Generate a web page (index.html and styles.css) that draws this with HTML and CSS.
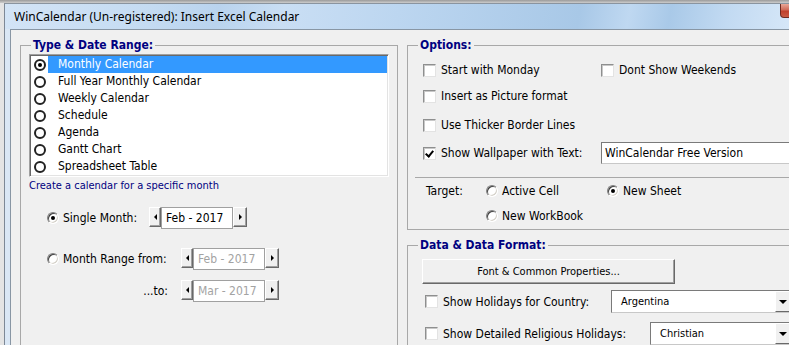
FILE: index.html
```html
<!DOCTYPE html>
<html lang="en">
<head>
    <meta charset="UTF-8">
    <title>WinCalendar - Insert Excel Calendar</title>
    <link rel="stylesheet" href="styles.css">
</head>
<body>
    <div class="window">
        <div class="titlebar">
            <span class="title">WinCalendar (Un-registered): Insert Excel Calendar</span>
            <span class="close"></span>
        </div>
        <div class="client">
            <fieldset class="group group-type">
                <legend>Type &amp; Date Range:</legend>
                <ul class="listbox">
                    <li class="item selected"><span class="lradio on"></span><span class="item-text">Monthly Calendar</span></li>
                    <li class="item"><span class="lradio"></span><span class="item-text">Full Year Monthly Calendar</span></li>
                    <li class="item"><span class="lradio"></span><span class="item-text">Weekly Calendar</span></li>
                    <li class="item"><span class="lradio"></span><span class="item-text">Schedule</span></li>
                    <li class="item"><span class="lradio"></span><span class="item-text">Agenda</span></li>
                    <li class="item"><span class="lradio"></span><span class="item-text">Gantt Chart</span></li>
                    <li class="item"><span class="lradio"></span><span class="item-text">Spreadsheet Table</span></li>
                </ul>
                <p class="hint">Create a calendar for a specific month</p>
                <div class="single-row">
                    <label class="opt single-label"><span class="radio on"></span>Single Month:</label>
                    <div class="spin">
                        <span class="spin-btn prev"></span>
                        <span class="spin-val">Feb - 2017</span>
                        <span class="spin-btn next"></span>
                    </div>
                </div>
                <div class="range">
                    <label class="opt"><span class="radio"></span>Month Range from:</label>
                    <div class="spin disabled">
                        <span class="spin-btn prev"></span>
                        <span class="spin-val">Feb - 2017</span>
                        <span class="spin-btn next"></span>
                    </div>
                    <span class="to">...to:</span>
                    <div class="spin disabled">
                        <span class="spin-btn prev"></span>
                        <span class="spin-val">Mar - 2017</span>
                        <span class="spin-btn next"></span>
                    </div>
                </div>
            </fieldset>

            <div class="right">
                <fieldset class="group group-options">
                    <legend>Options:</legend>
                    <div class="opts">
                        <div class="row">
                            <label class="opt cell1"><span class="check"></span>Start with Monday</label>
                            <label class="opt"><span class="check"></span>Dont Show Weekends</label>
                        </div>
                        <div class="row row2">
                            <label class="opt cell1"><span class="check"></span>Insert as Picture format</label>
                        </div>
                        <div class="row row3">
                            <label class="opt cell1"><span class="check"></span>Use Thicker Border Lines</label>
                        </div>
                        <div class="row row4">
                            <label class="opt cell1"><span class="check on"></span>Show Wallpaper with Text:</label>
                            <span class="textbox">WinCalendar Free Version</span>
                        </div>
                    </div>
                    <div class="sep"></div>
                    <div class="target">
                        <span>Target:</span>
                        <label class="opt"><span class="radio"></span>Active Cell</label>
                        <label class="opt"><span class="radio on"></span>New Sheet</label>
                        <span></span>
                        <label class="opt"><span class="radio"></span>New WorkBook</label>
                    </div>
                </fieldset>

                <fieldset class="group group-data">
                    <legend>Data &amp; Data Format:</legend>
                    <div class="font-btn">Font &amp; Common Properties...</div>
                    <div class="hol-row">
                        <label class="opt country-label"><span class="check"></span>Show Holidays for Country:</label>
                        <div class="combo country">
                            <span class="combo-text">Argentina</span>
                            <span class="combo-btn"></span>
                        </div>
                    </div>
                    <div class="hol-row second">
                        <label class="opt relig-label"><span class="check"></span>Show Detailed Religious Holidays:</label>
                        <div class="combo relig">
                            <span class="combo-text">Christian</span>
                            <span class="combo-btn"></span>
                        </div>
                    </div>
                </fieldset>
            </div>
        </div>
    </div>
</body>
</html>
```

FILE: styles.css
```css
body {
    margin: 0;
    width: 789px;
    height: 345px;
    overflow: hidden;
    background: linear-gradient(#9a9a9a, #cdcdcd 3px, #e4e4e4 3px);
    font-family: "DejaVu Sans Condensed", "DejaVu Sans", sans-serif;
    font-stretch: condensed;
    font-size: 12px;
    color: #000;
}

.window {
    margin: 3px 0 0 4px;
    width: 819px;
    height: 342px;
    border-left: 1px solid #7d8896;
    border-top: 1px solid #8a949f;
    background: #dae7f5;
}

.titlebar {
    height: 25px;
    display: flex;
    align-items: flex-start;
    justify-content: space-between;
    background: linear-gradient(100deg, #d3e4f6 0%, #c4dbf2 18%, #b9d3ee 26%, #c9def4 34%, #bcd6f0 48%, #a8c8e7 70%, #bfd8f1 76%, #a9c9e8 81%, #c2daf2 88%, #d6e7f8 96%);
}

.title {
    padding-left: 9px;
    line-height: 25px;
    font-family: "Noto Sans", sans-serif;
    font-stretch: normal;
    font-size: 12px;
    color: #000;
}

.close {
    width: 44px;
    height: 14px;
    box-sizing: border-box;
    border: 1px solid #6d2a20;
    border-top: none;
    border-radius: 0 0 4px 4px;
    background: linear-gradient(#e9a898, #d06a58 45%, #c0402c 55%, #c85a44);
}

.client {
    margin-left: 5px;
    height: 315px;
    overflow: hidden;
    border-left: 1px solid #8896a4;
    border-top: 1px solid #8896a4;
    background: #f0f0f0;
    display: flex;
    align-items: flex-start;
    gap: 9px;
    padding-left: 9px;
}

.group {
    margin: 0;
    padding: 0;
    border: 1px solid #a8a8a8;
    min-width: 0;
    box-sizing: border-box;
}

.group legend {
    margin-left: 10px;
    padding: 0 2px;
    font-weight: bold;
    color: #000080;
    line-height: 14px;
}

/* left: type & range */
.group-type {
    width: 378px;
    height: 330px;
    margin-top: 8px;
}

.listbox {
    list-style: none;
    margin: 2px 0 0 8px;
    padding: 1px;
    width: 360px;
    height: 123px;
    box-sizing: border-box;
    background: #fff;
    border: 1px solid;
    border-color: #a0a0a0 #fff #fff #a0a0a0;
    box-shadow: inset 1px 1px #696969, inset -1px -1px #e3e3e3;
}

.item {
    display: flex;
    align-items: center;
    height: 17px;
}

.lradio {
    position: relative;
    flex: none;
    width: 12px;
    height: 12px;
    margin-left: 3px;
    box-sizing: border-box;
    border: 2px solid #222;
    border-radius: 50%;
}

.lradio.on::after {
    content: "";
    position: absolute;
    left: 2px;
    top: 2px;
    width: 4px;
    height: 4px;
    border-radius: 50%;
    background: #000;
}

.item-text {
    flex: 1;
    margin-left: 2px;
    padding-left: 10px;
    line-height: 17px;
}

.selected .item-text {
    background: #3399ff;
    color: #fff;
}

.hint {
    margin: 2px 0 0 8px;
    font-size: 11px;
    line-height: 14px;
    color: #000080;
}

.opt {
    display: flex;
    align-items: center;
    gap: 4px;
    white-space: nowrap;
}

.radio {
    position: relative;
    flex: none;
    width: 12px;
    height: 12px;
    box-sizing: border-box;
    border: 1px solid;
    border-color: #808080 #fff #fff #808080;
    border-radius: 50%;
    background: #fff;
    box-shadow: inset 1px 1px #404040, inset -1px -1px #d4d0c8;
}

.radio.on::after {
    content: "";
    position: absolute;
    left: 3px;
    top: 3px;
    width: 4px;
    height: 4px;
    border-radius: 50%;
    background: #000;
}

.single-row {
    display: flex;
    align-items: center;
    height: 22px;
    margin-top: 14px;
    padding-left: 26px;
}

.single-label {
    width: 102px;
}

.range {
    display: grid;
    grid-template-columns: 121px auto;
    justify-content: start;
    align-items: center;
    column-gap: 13px;
    row-gap: 10px;
    margin-top: 19px;
    padding-left: 26px;
}

.to {
    justify-self: end;
}

.spin {
    display: flex;
    align-items: flex-start;
    height: 22px;
}

.spin-btn {
    display: flex;
    align-items: center;
    justify-content: center;
    width: 12px;
    height: 20px;
    box-sizing: border-box;
    background: #f0f0f0;
    border: 1px solid;
    border-color: #fff #696969 #696969 #fff;
    box-shadow: inset -1px -1px #a0a0a0;
}

.spin-btn.next {
    width: 14px;
}

.spin-btn::before {
    content: "";
    border-style: solid;
    border-color: transparent #000;
}

.spin-btn.prev::before {
    border-width: 3px 3px 3px 0;
}

.spin-btn.next::before {
    border-width: 3px 0 3px 3px;
}

.spin-val {
    width: 72px;
    height: 22px;
    box-sizing: border-box;
    border: 1px solid #a0a0a0;
    background: #fff;
    padding-left: 4px;
    line-height: 20px;
}

.disabled .spin-val {
    color: #a3a3a3;
}

/* right: options */
.right {
    display: flex;
    flex-direction: column;
    width: 400px;
}

.group-options {
    margin-top: 8px;
}

.opts {
    margin: 9px 0 0 15px;
}

.row {
    display: flex;
    align-items: center;
    height: 18px;
}

.row2 {
    margin-top: 8px;
}

.row3 {
    margin-top: 11px;
}

.row4 {
    height: 22px;
    margin-top: 8px;
}

.cell1 {
    width: 178px;
}

.check {
    position: relative;
    flex: none;
    width: 13px;
    height: 13px;
    margin-right: 1px;
    box-sizing: border-box;
    border: 1px solid;
    border-color: #8e8f8f #e3e3e3 #e3e3e3 #8e8f8f;
    background: #fff;
    box-shadow: inset 1px 1px #c8c8c8;
}

.check.on::after {
    content: "";
    position: absolute;
    left: 3px;
    top: 1px;
    width: 3px;
    height: 6px;
    border: solid #000;
    border-width: 0 2px 2px 0;
    transform: rotate(40deg);
}

.textbox {
    width: 200px;
    height: 22px;
    box-sizing: border-box;
    border: 1px solid;
    border-color: #7a7a7a #c8c8c8 #c8c8c8 #7a7a7a;
    background: #fff;
    padding-left: 3px;
    line-height: 20px;
}

.sep {
    margin: 13px 0 0 7px;
    border-top: 1px solid #a8a8a8;
}

.target {
    display: grid;
    grid-template-columns: 60px 121px auto;
    grid-template-rows: 16px 16px;
    align-items: center;
    row-gap: 9px;
    margin: 5px 0 5px 18px;
}

/* right: data */
.group-data {
    margin-top: 8px;
}

.font-btn {
    width: 253px;
    height: 25px;
    margin: 7px 0 0 14px;
    box-sizing: border-box;
    border: 1px solid;
    border-color: #fff #696969 #696969 #fff;
    box-shadow: inset -1px -1px #a0a0a0;
    background: #f0f0f0;
    font-size: 11px;
    line-height: 23px;
    text-align: center;
}

.hol-row {
    display: flex;
    align-items: center;
    height: 23px;
    margin: 6px 0 0 17px;
}

.hol-row.second {
    margin-top: 9px;
}

.country-label {
    width: 186px;
}

.relig-label {
    width: 225px;
}

.combo {
    display: flex;
    height: 23px;
    box-sizing: border-box;
    border: 1px solid;
    border-color: #7a7a7a #c8c8c8 #c8c8c8 #7a7a7a;
    background: #fff;
}

.combo.country {
    width: 180px;
}

.combo.relig {
    width: 141px;
}

.combo-text {
    flex: 1;
    padding-left: 9px;
    font-size: 11px;
    line-height: 21px;
}

.combo-btn {
    display: flex;
    align-items: center;
    justify-content: center;
    width: 15px;
    box-sizing: border-box;
    background: #f0f0f0;
    border: 1px solid;
    border-color: #fff #696969 #696969 #fff;
}

.combo-btn::before {
    content: "";
    border-style: solid;
    border-width: 4px 4px 0;
    border-color: #000 transparent;
}
```
